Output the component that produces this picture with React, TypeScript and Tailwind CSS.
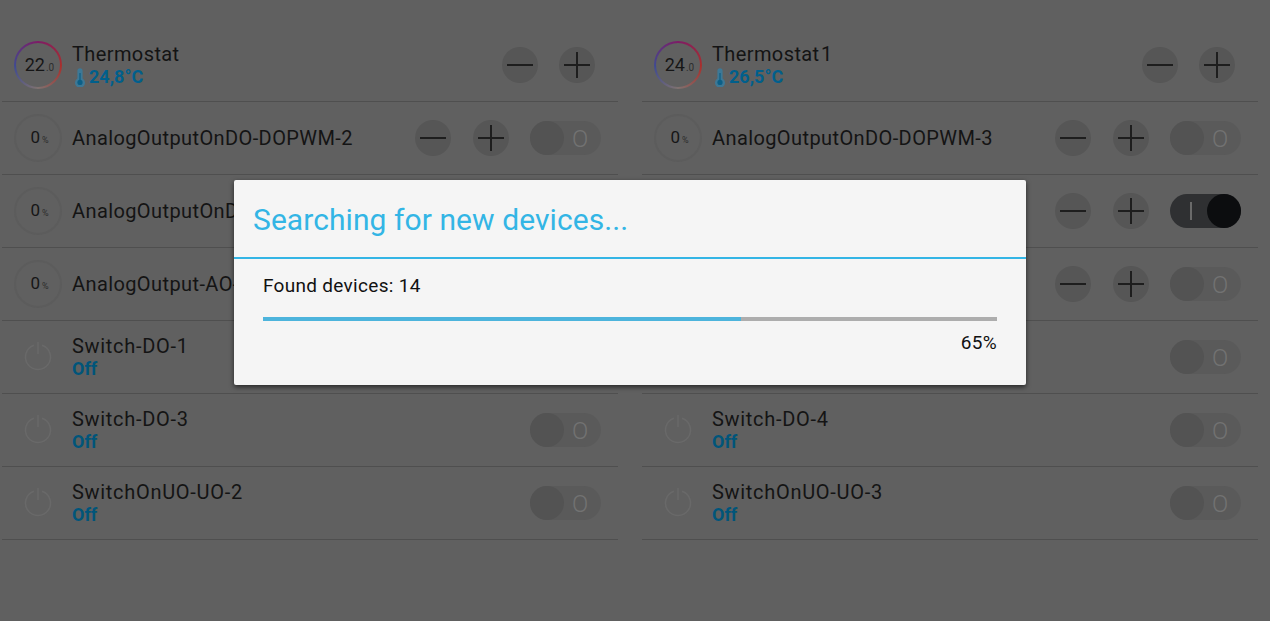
import React from 'react';

type Row = {
    name: string;
    kind: 'thermostat' | 'analog' | 'switch';
    temp?: string;
    setpoint?: string;
    on?: boolean;
};

const leftRows: Row[] = [
    { name: 'Thermostat', kind: 'thermostat', temp: '24,8°C', setpoint: '22' },
    { name: 'AnalogOutputOnDO-DOPWM-2', kind: 'analog' },
    { name: 'AnalogOutputOnDO-DOPWM-4', kind: 'analog' },
    { name: 'AnalogOutput-AO-1', kind: 'analog' },
    { name: 'Switch-DO-1', kind: 'switch' },
    { name: 'Switch-DO-3', kind: 'switch' },
    { name: 'SwitchOnUO-UO-2', kind: 'switch' },
];

const rightRows: Row[] = [
    { name: 'Thermostat 1', kind: 'thermostat', temp: '26,5°C', setpoint: '24' },
    { name: 'AnalogOutputOnDO-DOPWM-3', kind: 'analog' },
    { name: 'AnalogOutputOnDO-DOPWM-5', kind: 'analog', on: true },
    { name: 'AnalogOutput-AO-2', kind: 'analog' },
    { name: 'Switch-DO-2', kind: 'switch' },
    { name: 'Switch-DO-4', kind: 'switch' },
    { name: 'SwitchOnUO-UO-3', kind: 'switch' },
];

const RoundButton: React.FC<{ plus?: boolean }> = ({ plus }) => (
    <div className="w-[36px] h-[36px] rounded-full bg-[#565656] flex items-center justify-center shrink-0">
        <svg width="26" height="26" viewBox="0 0 26 26">
            <rect x="0" y="12" width="26" height="2" fill="#1e1e1e" />
            {plus && <rect x="12" y="0" width="2" height="26" fill="#1e1e1e" />}
        </svg>
    </div>
);

const Toggle: React.FC<{ on?: boolean }> = ({ on }) =>
    on ? (
        <div className="w-[71px] h-[34px] rounded-full bg-[#2f3032] flex items-center justify-end relative shrink-0">
            <span className="absolute left-[20px] top-[8px] w-[2px] h-[18px] bg-[#6a6a6a]" />
            <div className="w-[34px] h-[34px] rounded-full bg-[#0c0d0f]" />
        </div>
    ) : (
        <div className="w-[71px] h-[34px] rounded-full bg-[#5a5a5a] flex items-center shrink-0">
            <div className="w-[34px] h-[34px] rounded-full bg-[#535353]" />
            <span className="ml-[8px] pt-[2px] text-[24px] leading-none font-light text-[#727272]">O</span>
        </div>
    );

const Dial: React.FC<{ row: Row }> = ({ row }) => {
    if (row.kind === 'thermostat') {
        return (
            <div className="w-[48px] h-[48px] rounded-full bg-[conic-gradient(#7d1b66,#a9302c_26%,#7f7270_50%,#3f4a92_74%,#7d1b66)] p-[2px] shrink-0">
                <div className="w-full h-full rounded-full bg-[#606060] flex items-center justify-center pl-[3px] text-[#161616]">
                    <span className="text-[18px] leading-none">{row.setpoint}</span>
                    <span className="text-[10px] leading-none mt-[7px] ml-px text-[#2c2c2c]">.0</span>
                </div>
            </div>
        );
    }
    if (row.kind === 'analog') {
        return (
            <div className="w-[48px] h-[48px] rounded-full border-2 border-[#5c5c5c] flex items-center justify-center pl-[3px] shrink-0 text-[#161616]">
                <span className="text-[17px] leading-none">0</span>
                <span className="text-[9px] leading-none mt-[5px] ml-[2px] text-[#2c2c2c]">%</span>
            </div>
        );
    }
    return (
        <div className="w-[48px] h-[48px] flex items-center justify-center shrink-0">
            <svg width="30" height="32" viewBox="0 0 30 32" fill="none" stroke="#696969" strokeWidth="1.5">
                <path d="M11 4.2 A 12.5 12.5 0 1 0 19 4.2" />
                <path d="M15 1 V 13" />
            </svg>
        </div>
    );
};

const Thermometer = () => (
    <svg width="12" height="19" viewBox="0 0 12 19" className="mr-[3px] mt-[1px] shrink-0">
        <path d="M3.4 2.8a2.6 2.6 0 0 1 5.2 0v7.6a5 5 0 1 1-5.2 0z" fill="#3d7896" />
        <circle cx="6" cy="14.4" r="2.6" fill="#0b5f87" />
        <rect x="5.4" y="5" width="1.2" height="8" fill="#0b5f87" />
    </svg>
);

const DeviceRow: React.FC<{ row: Row }> = ({ row }) => (
    <div className="h-[73px] border-b border-[#4f4f4f] flex items-center pb-px pl-[12px] pr-[17px]">
        <Dial row={row} />
        <div className="ml-[10px] pt-[2px] flex-1 min-w-0 whitespace-nowrap">
            <div className={row.kind === 'switch'
                ? 'text-[20px] leading-[23px] tracking-[0.7px] text-[#141414]'
                : 'text-[20px] leading-[23px] tracking-[0.4px] [word-spacing:-4px] text-[#141414]'}>
                {row.name}
            </div>
            {row.kind === 'thermostat' && (
                <div className="flex items-center -mt-px text-[18px] leading-[23px] font-bold text-[#005f8c] pl-[2px]">
                    <Thermometer />
                    {row.temp}
                </div>
            )}
            {row.kind === 'switch' && (
                <div className="-mt-px text-[18px] leading-[23px] font-bold text-[#00557a]">Off</div>
            )}
        </div>
        {row.kind === 'thermostat' && (
            <div className="flex gap-[21px] mr-[6px]">
                <RoundButton />
                <RoundButton plus />
            </div>
        )}
        {row.kind === 'analog' && (
            <div className="flex gap-[22px] mr-[21px]">
                <RoundButton />
                <RoundButton plus />
            </div>
        )}
        {row.kind !== 'thermostat' && <Toggle on={row.on} />}
    </div>
);

export default function App() {
    return (
        <div className="relative w-[1270px] h-[621px] overflow-hidden bg-[#606060] font-['Roboto',sans-serif]">
            <div className="flex gap-[24px] pt-[29px] pl-[2px]">
                <div className="w-[616px]">
                    {leftRows.map(r => <DeviceRow key={r.name} row={r} />)}
                </div>
                <div className="w-[616px]">
                    {rightRows.map(r => <DeviceRow key={r.name} row={r} />)}
                </div>
            </div>

            {/* Dialog */}
            <div className="absolute left-[234px] top-[180px] w-[792px] h-[205px] bg-[#f5f5f5] rounded-[2px] shadow-[0_2px_5px_rgba(0,0,0,0.6)]">
                <div className="h-[79px] border-b-2 border-[#33b5e5] flex items-center pl-[19px] pt-px text-[30px] tracking-[0.07px] text-[#33b5e5]">
                    Searching for new devices...
                </div>
                <div className="px-[29px] pt-[15px]">
                    <div className="text-[19px] leading-[24px] tracking-[0.3px] text-[#111]">Found devices: 14</div>
                    <div className="h-[4px] bg-[#adadad] mt-[19px]">
                        <div className="h-full bg-[#4db4dc]" style={{ width: '65.1%' }} />
                    </div>
                    <div className="text-[19px] leading-[24px] tracking-[0.3px] text-[#111] text-right mt-[10px]">65%</div>
                </div>
            </div>
        </div>
    );
}
